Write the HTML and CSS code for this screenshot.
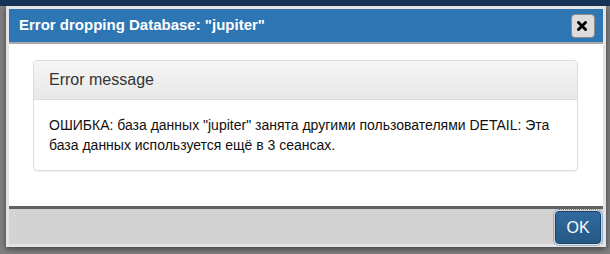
FILE: index.html
```html
<!DOCTYPE html>
<html lang="en">

<head>
  <meta charset="UTF-8">
  <title>Error dropping Database</title>
  <link rel="stylesheet" href="styles.css">
</head>

<body>
  <div class="screen">
    <div class="dialog">
      <div class="dialog-head">
        <span class="dialog-title">Error dropping Database: "jupiter"</span>
        <button class="close-btn" title="Close">
          <svg width="10" height="10" viewBox="0 0 10 10">
            <path d="M1.5 1.5 L8.5 8.5 M8.5 1.5 L1.5 8.5" stroke="#000" stroke-width="2.8" stroke-linecap="square" />
          </svg>
        </button>
      </div>
      <div class="dialog-body">
        <div class="panel">
          <div class="panel-heading">Error message</div>
          <div class="panel-body">
            ОШИБКА: база данных "jupiter" занята другими пользователями DETAIL: Эта база данных используется ещё в 3 сеансах.
          </div>
        </div>
      </div>
      <div class="dialog-foot">
        <button class="ok-btn">OK</button>
      </div>
    </div>
  </div>
</body>

</html>
```

FILE: styles.css
```css
* {
  box-sizing: border-box;
}

body {
  margin: 0;
  background: #7f7f7f;
  font-family: "Liberation Sans", Arial, sans-serif;
  color: #333;
}

.screen {
  height: 254px;
  padding: 6px 4px 0 6px;
  background: linear-gradient(#183558 0, #183558 6px, #808080 6px);
}

.dialog {
  width: 600px;
  border: 3px solid #e4e4e4;
  background: #fff;
  box-shadow: 0 2px 6px rgba(0, 0, 0, 0.5);
}

.dialog-head {
  display: flex;
  align-items: center;
  justify-content: space-between;
  height: 35px;
  padding: 0 8px 2px 10px;
  background: #2d75b3;
  border-bottom: 2px solid #a9a9a9;
}

.dialog-title {
  color: #fff;
  font-size: 15px;
  font-weight: bold;
}

.close-btn {
  display: flex;
  align-items: center;
  justify-content: center;
  width: 24px;
  height: 24px;
  padding: 0 2px 0 0;
  margin-top: 2px;
  border: 1px solid #8c8c8c;
  border-radius: 4px;
  background: #dcdcdc;
}

.dialog-body {
  height: 162px;
  padding: 16px 25px 0 24px;
}

.panel {
  border: 1px solid #ddd;
  border-radius: 4px;
  box-shadow: 0 1px 1px rgba(0, 0, 0, 0.05);
}

.panel-heading {
  padding: 10px 15px;
  font-size: 16px;
  line-height: 1.1;
  background: linear-gradient(#f5f5f5, #e8e8e8);
  border-bottom: 1px solid #ddd;
  border-radius: 3px 3px 0 0;
}

.panel-body {
  padding: 15px;
  font-size: 14px;
  line-height: 20px;
  color: #111;
}

.dialog-foot {
  display: flex;
  justify-content: flex-end;
  height: 38px;
  padding: 2px 2px 0 0;
  background: #d3d3d3;
  border-top: 3px solid #606060;
}

.ok-btn {
  width: 46px;
  height: 33px;
  padding: 0;
  border: 1px solid #1c4266;
  border-radius: 4px;
  background: linear-gradient(#2f6a9e, #265985);
  color: #fff;
  font-family: "Liberation Sans", Arial, sans-serif;
  font-size: 16px;
  outline: 1px dotted #3d8ee6;
  outline-offset: 1px;
}
```
